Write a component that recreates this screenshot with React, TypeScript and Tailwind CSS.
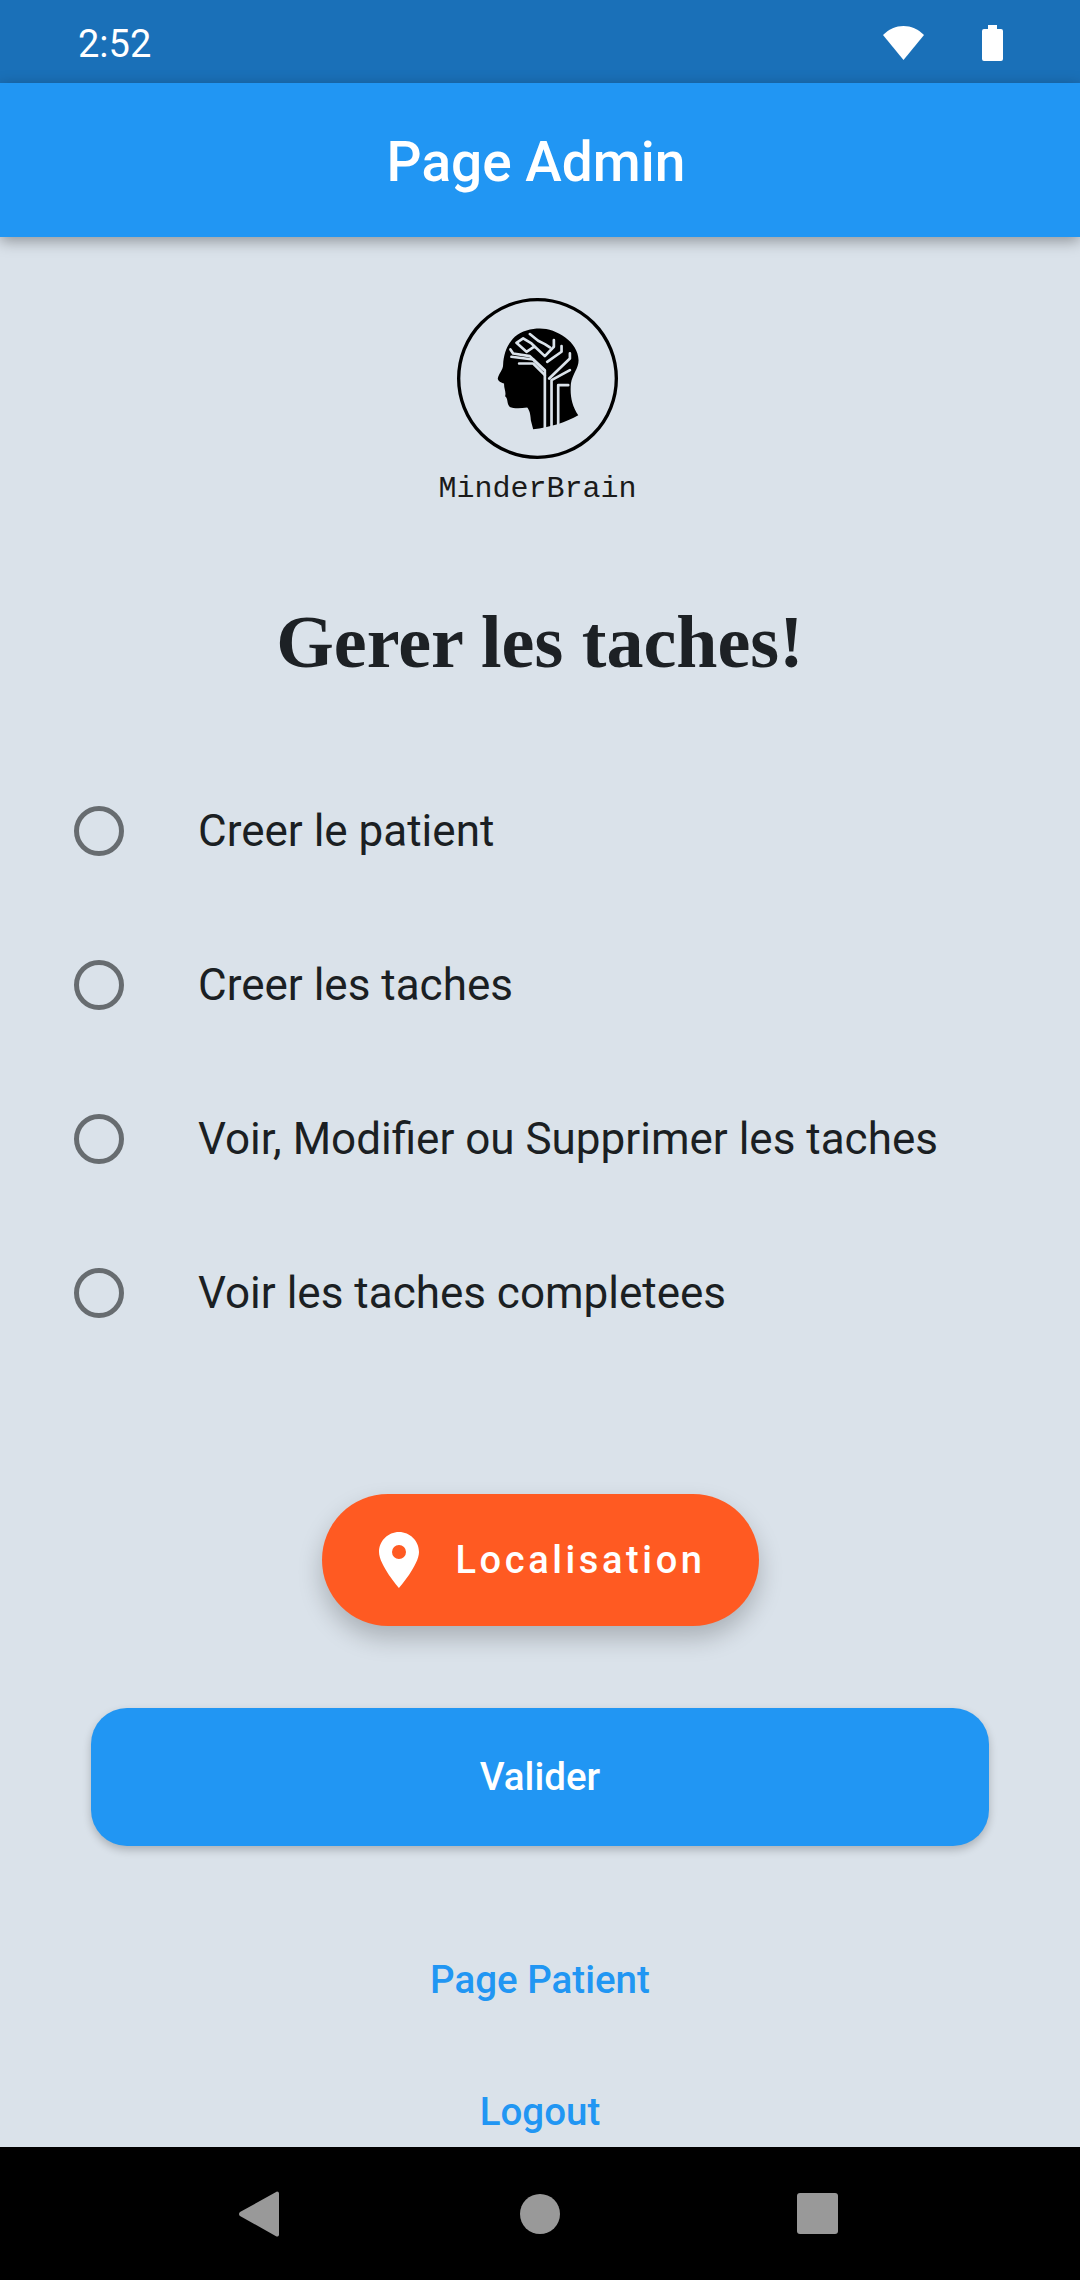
const tasks = [
  "Creer le patient",
  "Creer les taches",
  "Voir, Modifier ou Supprimer les taches",
  "Voir les taches completees",
]

function StatusBar() {
  return (
    <div className="flex h-[83px] shrink-0 items-center bg-[#1a70b8] pl-[78px] pt-[3px] text-white">
      <span className="pt-[2px] text-[38px] leading-none">2:52</span>
      <svg className="ml-auto h-[34px] w-[41px]" viewBox="0 0 41 34" fill="white">
        <path d="M20.5 34L0 9C6 3 13 0 20.5 0S35 3 41 9z" />
      </svg>
      <svg className="ml-[58px] mr-[77px] h-[36px] w-[21px]" viewBox="0 0 21 36" fill="white">
        <path d="M6 0h9v4h4a2 2 0 0 1 2 2v28a2 2 0 0 1-2 2H2a2 2 0 0 1-2-2V6a2 2 0 0 1 2-2h4z" />
      </svg>
    </div>
  )
}

function Logo() {
  return (
    <svg className="h-[161px] w-[161px]" viewBox="172 54 482 482">
      <circle cx="413" cy="295" r="236" fill="none" stroke="black" strokeWidth="10" />
      <path
        d="M420 145C470 145 535 185 536 240C536 265 518 280 513 310C510 345 515 375 535 405C500 425 450 442 400 447L393 420C392 400 388 388 382 382C360 385 340 385 330 380C320 370 326 355 316 348C320 335 312 325 313 310C305 308 294 302 294 295C297 280 310 268 310 255C312 215 325 190 345 170C365 152 395 145 420 145z"
        fill="black"
      />
      <g fill="none" stroke="#dae2ea" strokeWidth="8" strokeLinecap="round" strokeLinejoin="round">
        <path d="M390 162L415 182L435 192L450 202" />
        <path d="M462 180V200L435 228L395 190L370 175L350 188L380 215L400 202" />
        <path d="M485 198V215L442 245" />
        <path d="M510 220V235L448 295" />
        <path d="M332 208L340 220L390 228L435 270V445" />
        <path d="M335 230L400 238L430 268" />
        <path d="M358 250H400L435 285" />
        <path d="M455 445V300L510 270" />
        <path d="M475 436V315H505" />
      </g>
    </svg>
  )
}

function TaskRow({ label }: { label: string }) {
  return (
    <div className="flex h-[154px] items-center pl-[74px]">
      <span className="h-[50px] w-[50px] shrink-0 rounded-full border-[5.5px] border-[#676c70]" />
      <span className="ml-[74px] text-[44px] leading-none text-[#1b1f23]">{label}</span>
    </div>
  )
}

export default function App() {
  return (
    <div className="flex h-[2280px] w-[1080px] flex-col overflow-hidden bg-[#dae2ea] font-['Roboto',sans-serif]">
      <StatusBar />
      <div className="relative flex h-[154px] shrink-0 items-center justify-center bg-[#2196f3] pr-[8px] pt-[5px] shadow-[0_4px_14px_rgba(0,0,0,0.35)]">
        <h1 className="text-[55px] font-medium leading-none text-white">Page Admin</h1>
      </div>

      <div className="flex min-h-0 flex-1 flex-col">
        {/* Logo */}
        <div className="flex flex-col items-center pr-[5px] pt-[61px]">
          <Logo />
          <span className="mt-[13px] font-['Liberation_Mono',monospace] text-[30px] leading-[34px] text-[#1a1a1a]">
            MinderBrain
          </span>
        </div>

        <h2 className="mt-[94px] text-center font-['Liberation_Serif',serif] text-[74px] font-bold leading-[84px] text-[#1d2125]">
          Gerer les taches!
        </h2>

        {/* Tasks */}
        <div className="mt-[70px] flex flex-col">
          {tasks.map((t) => (
            <TaskRow key={t} label={t} />
          ))}
        </div>

        {/* Actions */}
        <div className="mt-[124px] flex flex-col items-center">
          <button className="flex h-[132px] w-[437px] items-center rounded-[66px] bg-[#ff5a22] pl-[57px] shadow-[0_12px_24px_rgba(0,0,0,0.22)]">
            <svg className="h-[56px] w-[40px]" viewBox="0 0 40 56" fill="white">
              <path
                fillRule="evenodd"
                d="M20 0C9 0 0 9 0 20c0 13 20 36 20 36s20-23 20-36C40 9 31 0 20 0zm0 27a7 7 0 1 1 0-14 7 7 0 0 1 0 14z"
              />
            </svg>
            <span className="ml-[37px] text-[38px] font-medium leading-none tracking-[3.6px] text-white">Localisation</span>
          </button>

          <button className="mt-[82px] flex h-[138px] w-[898px] items-center justify-center rounded-[36px] bg-[#2196f3] text-[38.5px] font-medium text-white shadow-[0_4px_8px_rgba(0,0,0,0.22)]">
            Valider
          </button>

          <a className="mt-[112px] text-[38.5px] font-medium leading-[44px] text-[#2196f3]">Page Patient</a>
          <a className="mt-[88px] text-[38.5px] font-medium leading-[44px] text-[#2196f3]">Logout</a>
        </div>
      </div>

      {/* Nav bar */}
      <div className="relative flex h-[133px] shrink-0 items-center bg-black">
        <svg className="ml-[239px] h-[46px] w-[40px]" viewBox="0 0 40 46" fill="#999999">
          <path d="M38 0.5a2 2 0 0 1 2 2v41a2 2 0 0 1-2.5 2L1 25a2.5 2.5 0 0 1 0-4z" />
        </svg>
        <span className="ml-[241px] h-[40px] w-[40px] rounded-full bg-[#999999]" />
        <span className="ml-[237px] h-[41px] w-[41px] rounded-[3px] bg-[#999999]" />
      </div>
    </div>
  )
}
